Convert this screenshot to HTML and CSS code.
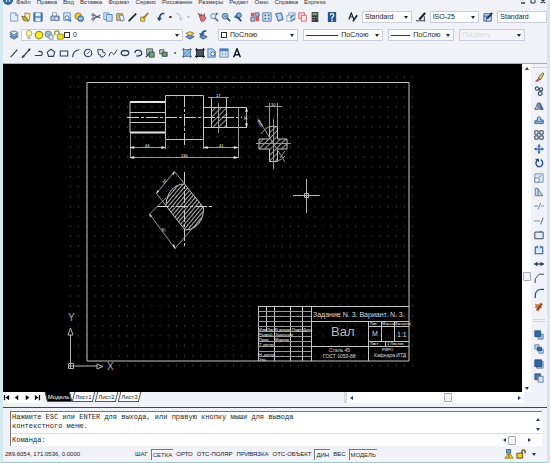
FILE: index.html
```html
<!DOCTYPE html>
<html lang="ru">
<head>
<meta charset="utf-8">
<title>Вал</title>
<link rel="stylesheet" href="styles.css">
</head>
<body>
<svg class="sprite" aria-hidden="true">
    <symbol id="new" viewBox="0 0 12 12"><path d="M2 1h6l2.500 2.500V11H2z" fill="#e3effb" stroke="#6f8fb5"/><path d="M8 1v3h3" fill="none" stroke="#6f8fb5"/></symbol>
    <symbol id="open" viewBox="0 0 12 12"><path d="M5 1l6 1-1 8-6-2z" fill="#f4e9a8" stroke="#8b7a35"/><path d="M1 5l5 1 3 5-6-1z" fill="#c9b23d" stroke="#77661f"/></symbol>
    <symbol id="save" viewBox="0 0 12 12"><path d="M1 1h10v10H1z" fill="#4d86c4" stroke="#25598f"/><path d="M3 1h6v4H3zM3 7h6v4H3z" fill="#e4eff9"/></symbol>
    <symbol id="print" viewBox="0 0 12 12"><path d="M3 1h5v4H3z" fill="#fff" stroke="#7b8dac"/><path d="M1 5h10v5H1z" fill="#b9c5de" stroke="#54698f"/><circle cx="8" cy="8" r="2.500" fill="#dde4f2" stroke="#54698f"/></symbol>
    <symbol id="preview" viewBox="0 0 12 12"><path d="M2 1h8v9H2z" fill="#d7e8fa" stroke="#5f86b5"/><circle cx="6" cy="7" r="2.500" fill="#fff" stroke="#39669c"/><path d="M8 9l3 2.500" stroke="#39669c" stroke-width="1.500"/></symbol>
    <symbol id="publish" viewBox="0 0 12 12"><circle cx="5" cy="5" r="4" fill="#f0c93a" stroke="#95732a"/><circle cx="8" cy="8" r="3.500" fill="#6d9bd0" stroke="#37648f"/><path d="M6 8h4" stroke="#fff"/></symbol>
    <symbol id="cut" viewBox="0 0 12 12"><path d="M11 4L3 8M11 7L3 4" stroke="#3c4f68" stroke-width="1.300"/><circle cx="2.500" cy="3.500" r="1.500" fill="none" stroke="#3c4f68"/><circle cx="2.500" cy="8.500" r="1.500" fill="none" stroke="#3c4f68"/></symbol>
    <symbol id="copyclip" viewBox="0 0 12 12"><path d="M1 1h6v8H1z" fill="#dcecfb" stroke="#5d86b6"/><path d="M4 3h7v8H4z" fill="#c3ddf6" stroke="#4878ad"/></symbol>
    <symbol id="paste" viewBox="0 0 12 12"><path d="M2 2h7v8H2z" fill="#cdbf81" stroke="#7d713c"/><path d="M5 4h5l1 6-4 1z" fill="#e7edf6" stroke="#65789a"/></symbol>
    <symbol id="brush" viewBox="0 0 12 12"><path d="M11 2L5 8l-3 3" stroke="#22262c" stroke-width="2" fill="none"/></symbol>
    <symbol id="blockedit" viewBox="0 0 12 12"><path d="M2 6h5v5H2z" fill="#ead66b" stroke="#8c7726"/><path d="M11 1L5 8" stroke="#9a7d1d" stroke-width="2"/></symbol>
    <symbol id="undo" viewBox="0 0 12 12"><path d="M10 2C6 1 4 4 4 9" fill="none" stroke="#163f73" stroke-width="2"/><path d="M1 7h6l-3 4z" fill="#163f73"/></symbol>
    <symbol id="redo" viewBox="0 0 12 12"><path d="M2 2c4-1 6 2 6 7" fill="none" stroke="#c7ced9" stroke-width="2"/><path d="M5 7h6l-3 4z" fill="#c7ced9"/></symbol>
    <symbol id="dot" viewBox="0 0 6 12"><path d="M2 5h3v2H2z" fill="currentColor"/></symbol>
    <symbol id="pan" viewBox="0 0 12 12"><path d="M2 2l3 3V2l2 3 2-3v4l2 1-3 4H5z" fill="#d77a76" stroke="#8f3d4b"/><path d="M1 1l4 4" stroke="#384f7a"/></symbol>
    <symbol id="zoomrt" viewBox="0 0 12 12"><circle cx="5" cy="5" r="3" fill="#e9f2fb" stroke="#52749c"/><path d="M7 7l4 4" stroke="#52749c" stroke-width="2"/><path d="M9 1v3M8 2h3" stroke="#35506f"/></symbol>
    <symbol id="zoomwin" viewBox="0 0 12 12"><circle cx="5" cy="5" r="3.500" fill="#9fc4e8" stroke="#2f5686"/><path d="M7 7l4 4" stroke="#2f5686" stroke-width="2"/><path d="M4 5h3" stroke="#2f5686"/></symbol>
    <symbol id="zoomprev" viewBox="0 0 12 12"><circle cx="7" cy="4" r="3" fill="#86aedb" stroke="#2a4e7c"/><path d="M5 6l5 5" stroke="#223f63" stroke-width="2"/><path d="M5 2L1 6l4 2z" fill="#2c6aa9"/></symbol>
    <symbol id="props" viewBox="0 0 12 12"><path d="M1 1h4v4H1zM7 5h4v6H7z" fill="#cf5f63"/><path d="M6 1h5v4H6zM1 6h5v5H1z" fill="#a8bbd3" stroke="#6a5878"/></symbol>
    <symbol id="dcenter" viewBox="0 0 12 12"><path d="M1 1h10v10H1z" fill="#d9e8f7" stroke="#46698f"/><path d="M3 3h2v2H3zM7 3h2v2H7zM3 7h2v2H3zM7 7h2v2H7z" fill="#3d6796"/></symbol>
    <symbol id="palette" viewBox="0 0 12 12"><path d="M2 2l7-1 2 8-6 2z" fill="#8fb8e2" stroke="#356295"/><path d="M4 4l4-1M5 6l4-1M5 8l4-1" stroke="#fff"/></symbol>
    <symbol id="sheets" viewBox="0 0 12 12"><path d="M3 1h8v7H3z" fill="#d3e2f1" stroke="#8aa5c2"/><path d="M1 4h5v7H1z" fill="#eef4fa" stroke="#8aa5c2"/><path d="M5 7l5-4M6 11l5-3" stroke="#4a78ad" stroke-width="1.500"/></symbol>
    <symbol id="markup" viewBox="0 0 12 12"><path d="M1 1h7v7H1z" fill="#f6d7d7" stroke="#ca5d60"/><path d="M4 4h6v7H4z" fill="#f8e6e6" stroke="#ca5d60"/></symbol>
    <symbol id="calc" viewBox="0 0 12 12"><path d="M2 0h8v12H2z" fill="#343b3c"/><path d="M3 1h6v3H3z" fill="#6fa06d"/><path d="M3 6h1v1H3zM5 6h1v1H5zM8 6h1v1H8zM3 9h1v1H3zM5 9h1v1H5z" fill="#e4e4e4"/><path d="M8 9h1v1H8z" fill="#e33"/></symbol>
    <symbol id="help" viewBox="0 0 12 12"><path d="M1 0h10v12H1z" fill="#245690"/><path d="M4 4q0-2 2-2t2 2q0 1-2 2.500V8M6 9v2" fill="none" stroke="#fff" stroke-width="1.500"/></symbol>
    <symbol id="textstyle" viewBox="0 0 12 12"><path d="M1 9L4 1l3 8M2 6h4" fill="none" stroke="#16202d" stroke-width="1.400"/><path d="M11 4l-5 7" stroke="#16202d" stroke-width="2"/></symbol>
    <symbol id="dimstyle" viewBox="0 0 12 12"><path d="M0 10.500h11M10 5v6" stroke="#16202d"/><path d="M11 1L4 9" stroke="#16202d" stroke-width="2.500"/></symbol>
    <symbol id="tablestyle" viewBox="0 0 12 12"><path d="M1 2h9v9H1z" fill="#bfd8f2" stroke="#35557d"/><path d="M1 5h9M4 5v6" stroke="#35557d"/><path d="M11 1L5 8" stroke="#16304f" stroke-width="2"/></symbol>
    <symbol id="layers" viewBox="0 0 12 12"><path d="M1 8l5-2 5 2-5 3z" fill="#7f9fc6" stroke="#41658f"/><path d="M1 5.500l5-2 5 2-5 3z" fill="#a9c3e0" stroke="#41658f"/><path d="M1 3l5-2 5 2-5 3z" fill="#dce9f6" stroke="#41658f"/></symbol>
    <symbol id="bulb" viewBox="0 0 12 12"><circle cx="6" cy="4" r="3.500" fill="#fbf4a2" stroke="#a79c48"/><path d="M4 8h4v3H4z" fill="#b6b6b6"/></symbol>
    <symbol id="sun" viewBox="0 0 12 12"><circle cx="6" cy="6" r="4.500" fill="#f7ec2c" stroke="#998f1c" stroke-width="1.500"/></symbol>
    <symbol id="freeze" viewBox="0 0 12 12"><circle cx="5" cy="5" r="4" fill="#a4bcc7" stroke="#6c8793"/><path d="M6 6h5v5H6z" fill="#dfeaf0" stroke="#6c8793"/></symbol>
    <symbol id="unlock" viewBox="0 0 12 12"><path d="M1 6V3q0-2 2.500-2T6 3v3" fill="none" stroke="#8c841b" stroke-width="1.500"/><path d="M4 5h7v6H4z" fill="#efe32d" stroke="#8c841b"/></symbol>
    <symbol id="layercur" viewBox="0 0 12 12"><path d="M1 8l5-2 5 2-5 3z" fill="#6d93c3" stroke="#2f5584"/><path d="M1 4l5-2 5 2-5 3z" fill="#e6d66e" stroke="#847428"/></symbol>
    <symbol id="layerprev" viewBox="0 0 12 12"><path d="M2 8l4-2 5 2-5 3z" fill="#6d93c3" stroke="#2f5584"/><path d="M10 1q-5 0-5 4" fill="none" stroke="#285890" stroke-width="2"/><path d="M1 4h7L4 8z" fill="#285890"/></symbol>
    <symbol id="line" viewBox="0 0 12 12"><path d="M2 11l8-9" stroke="#26384f" stroke-width="1.300"/></symbol>
    <symbol id="xline" viewBox="0 0 12 12"><path d="M1 12L11 1" stroke="#16202d" stroke-width="1.300"/><path d="M9 1h2v2H9zM2 9h2v2H2z" fill="#16202d"/></symbol>
    <symbol id="pline" viewBox="0 0 12 12"><path d="M1 9h6q3 0 3-2.500T7 4H5" fill="none" stroke="#2b435f" stroke-width="1.300"/></symbol>
    <symbol id="polygon" viewBox="0 0 12 12"><path d="M6 1.500L10.500 5 9 10H3L1.500 5z" fill="none" stroke="#2b435f" stroke-width="1.300"/></symbol>
    <symbol id="rect" viewBox="0 0 12 12"><path d="M1.500 3.500h9v6h-9z" fill="none" stroke="#2b435f" stroke-width="1.300"/></symbol>
    <symbol id="arc" viewBox="0 0 12 12"><path d="M2 11q0-8 8-9" fill="none" stroke="#2b435f" stroke-width="1.300"/></symbol>
    <symbol id="circle" viewBox="0 0 12 12"><circle cx="6" cy="6" r="4.500" fill="none" stroke="#2b435f" stroke-width="1.300"/><path d="M5 7l3-3" stroke="#2b435f"/></symbol>
    <symbol id="cloud" viewBox="0 0 12 12"><path d="M2 2h6v3q4 0 3 3t-5 3l-1-3H3z" fill="none" stroke="#2b435f" stroke-width="1.200"/></symbol>
    <symbol id="spline" viewBox="0 0 12 12"><path d="M1 10q2-7 4-4t3 1 3-5" fill="none" stroke="#2b435f" stroke-width="1.200"/></symbol>
    <symbol id="ellipse" viewBox="0 0 12 12"><ellipse cx="6" cy="6" rx="4.500" ry="3" fill="none" stroke="#2b435f" stroke-width="1.600"/></symbol>
    <symbol id="earc" viewBox="0 0 12 12"><path d="M2 6q1-4 4.500-3.500T10.500 6 6 9.500" fill="none" stroke="#2b435f" stroke-width="1.500"/><path d="M4 8h3v3H4z" fill="#6a88ac"/></symbol>
    <symbol id="insert" viewBox="0 0 12 12"><path d="M2 1h7v7H2z" fill="#a5c2a0" stroke="#31505a"/><path d="M5 5h6v6H5z" fill="#75a376" stroke="#25413f"/><path d="M1 11l4-4" stroke="#1e3048" stroke-width="1.500"/></symbol>
    <symbol id="block" viewBox="0 0 12 12"><path d="M2 2h5v5H2z" fill="#b9d2b6" stroke="#31505a"/><path d="M5 5h6v5H5z" fill="#6a9d6d" stroke="#25413f"/></symbol>
    <symbol id="point" viewBox="0 0 12 12"><path d="M5 5h2v2H5z" fill="#233"/></symbol>
    <symbol id="hatch" viewBox="0 0 12 12"><path d="M2 2h8v8H2z" fill="#a9cdf0"/><path d="M2 0v12M10 0v12M0 2h12M0 10h12M2 8l6-6M4 10l6-6" stroke="#31608f" fill="none"/></symbol>
    <symbol id="gradient" viewBox="0 0 12 12"><path d="M2 2h8v8H2z" fill="#4c5562"/><path d="M2 0v12M10 0v12M0 2h12M0 10h12" stroke="#1e2731" stroke-width="1.300" fill="none"/></symbol>
    <symbol id="region" viewBox="0 0 12 12"><path d="M1 1h6l3 3v7H1z" fill="#b6d3ef" stroke="#47719f"/><circle cx="7" cy="7" r="2.500" fill="#e8f2fb" stroke="#2d5c90"/></symbol>
    <symbol id="table" viewBox="0 0 12 12"><path d="M1 1h10v10H1z" fill="#e5eefa" stroke="#4875b5"/><path d="M1 1h10v3H1z" fill="#4b7cc0"/><path d="M4 4v7M8 4v7M1 7h10" stroke="#9bb8df"/></symbol>
    <symbol id="mtext" viewBox="0 0 12 12"><path d="M2 11L6 1l4 10M3.500 8h5" fill="none" stroke="#111a26" stroke-width="1.800"/></symbol>
    <symbol id="erase" viewBox="0 0 12 12"><path d="M1 11l6-5 2 2-5 4z" fill="#c2556b"/><path d="M5 7l5-6 2 1-4 7z" fill="#e0d77a" stroke="#5e5c2e"/></symbol>
    <symbol id="copy" viewBox="0 0 12 12"><circle cx="3.500" cy="3" r="2" fill="none" stroke="#34475f" stroke-width="1.300"/><circle cx="8.500" cy="4" r="2" fill="none" stroke="#34475f" stroke-width="1.300"/><circle cx="7.500" cy="9" r="2.300" fill="#dce5ef" stroke="#34475f" stroke-width="1.300"/></symbol>
    <symbol id="mirror" viewBox="0 0 12 12"><path d="M5 2v8H1z" fill="#c3d7ec" stroke="#2d435f"/><path d="M7 2v8h4z" fill="#6689b1" stroke="#2d435f"/></symbol>
    <symbol id="offset" viewBox="0 0 12 12"><path d="M1 10V7h3V4q2-4 4 0v2h3v4z" fill="#b9d4f1" stroke="#2c5d9c" stroke-width="1.200"/><path d="M3 8h7" stroke="#2c5d9c"/></symbol>
    <symbol id="array" viewBox="0 0 12 12"><path d="M1 1h4v4H1zM7 1h4v4H7zM1 7h4v4H1zM7 7h4v4H7z" fill="none" stroke="#2f3f54" stroke-width="1.200"/></symbol>
    <symbol id="move" viewBox="0 0 12 12"><path d="M6 1v10M1 6h10" stroke="#2d65a8" stroke-width="1.500"/><path d="M6 0l2 3H4zM6 12l2-3H4zM0 6l3-2v4zM12 6L9 4v4z" fill="#2d65a8"/></symbol>
    <symbol id="rotate" viewBox="0 0 12 12"><path d="M4 2.500A4 4.500 0 1 0 8 2" fill="none" stroke="#1f4f88" stroke-width="1.700"/><path d="M1 1h5v4z" fill="#1f4f88"/></symbol>
    <symbol id="scale" viewBox="0 0 12 12"><path d="M1 1h10v10H1z" fill="#dfe9f3" stroke="#71869f"/><path d="M1 6h5v5H1zM6 5l3-2" fill="#fff" stroke="#5c7696"/></symbol>
    <symbol id="stretch" viewBox="0 0 12 12"><path d="M1.500 1.500h3l6 9h-9z" fill="#c4dbf0" stroke="#50657e"/><path d="M5 2v8" stroke="#50657e"/></symbol>
    <symbol id="trim" viewBox="0 0 12 12"><path d="M0 6h5M8 6h4" stroke="#4a80b5"/><path d="M8 2L5 10" stroke="#5b7188"/></symbol>
    <symbol id="extend" viewBox="0 0 12 12"><path d="M0 6h7" stroke="#4a80b5"/><path d="M11 2L8 10" stroke="#33465c"/></symbol>
    <symbol id="breakpt" viewBox="0 0 12 12"><path d="M1 2.500h10v8H1z" fill="#e4ebf3" stroke="#3d4e63" stroke-width="1.200"/><path d="M7 1h2v2H7z" fill="#2d65a8"/></symbol>
    <symbol id="break" viewBox="0 0 12 12"><path d="M4 2.500H1.500v8h9v-8H8" fill="#dceaf8" stroke="#2f5d90" stroke-width="1.300"/><path d="M3 1h2v3H3zM7 1h2v3H7z" fill="#4a80b5"/></symbol>
    <symbol id="join" viewBox="0 0 12 12"><path d="M0 6h12" stroke="#26313e" stroke-width="1.500"/><path d="M4 3L1 6l3 3zM8 3l3 3-3 3z" fill="#26313e"/></symbol>
    <symbol id="chamfer" viewBox="0 0 12 12"><path d="M1.500 12V7L6 1.500h6" fill="none" stroke="#3d4e63" stroke-width="1.200"/></symbol>
    <symbol id="fillet" viewBox="0 0 12 12"><path d="M1.500 12V9q0-7 8-7.500H12" fill="none" stroke="#1f4f88" stroke-width="1.500"/></symbol>
    <symbol id="explode" viewBox="0 0 12 12"><path d="M1 2l4 1 4-3-1 4 2 3-3 1-2 4-1-4-3-1 1-2z" fill="#d9763c"/><path d="M3 10l7-8" stroke="#612a1a" stroke-width="1.500"/></symbol>
    <symbol id="front" viewBox="0 0 12 12"><path d="M5 5h6v6H5z" fill="#a6c3e0" stroke="#56789c"/><path d="M1 1h7v7H1z" fill="#3569a3" stroke="#1f4c80"/></symbol>
    <symbol id="back" viewBox="0 0 12 12"><path d="M1 1h5v5H1zM6 6h5v5H6z" fill="#c3d6ea" stroke="#56789c"/><path d="M4 4h5v4H4z" fill="#3569a3" stroke="#1f4c80"/></symbol>
    <symbol id="above" viewBox="0 0 12 12"><path d="M3 3h8v8H3z" fill="#9dbbda" stroke="#56789c"/><path d="M1 1h8v8H1z" fill="#2f65a2" stroke="#1f4c80"/></symbol>
    <symbol id="below" viewBox="0 0 12 12"><path d="M1 1h7v7H1z" fill="#51719b" stroke="#31507a"/><path d="M5 4h6v7H5z" fill="#d7e4f2" stroke="#56789c"/></symbol>
    <symbol id="comm" viewBox="0 0 12 12"><path d="M3 0h5v5H3z" fill="#6c99ca" stroke="#355f90"/><path d="M6 4l5 7H1z" fill="#f3da34" stroke="#7f6d13"/><path d="M6 6v4" stroke="#222"/></symbol>
    <symbol id="padlock" viewBox="0 0 12 12"><path d="M7 6V3q0-2 2-2t2 2v2" fill="none" stroke="#4d430d" stroke-width="1.500"/><path d="M1 5h7v6H1z" fill="#eec92a" stroke="#4d430d"/></symbol>
</svg>

<div class="app">
    <header class="menubar">
        <svg class="logo" viewBox="0 0 10 10" aria-hidden="true"><circle cx="5" cy="5" r="5" fill="#276a9c"/><path d="M3 7l2-5 2 5" stroke="#fff" fill="none"/></svg>
        <nav class="menu">
            <a href="#">Файл</a><a href="#">Правка</a><a href="#">Вид</a><a href="#">Вставка</a><a href="#">Формат</a><a href="#">Сервис</a><a href="#">Рисование</a><a href="#">Размеры</a><a href="#">Редакт</a><a href="#">Окно</a><a href="#">Справка</a><a href="#">Express</a>
        </nav>
        <div class="winbtns">
            <button class="btn" aria-label="Свернуть"><svg viewBox="0 0 8 8"><path d="M2 6h4" stroke="#234" stroke-width="1.500"/></svg></button>
            <button class="btn" aria-label="Восстановить"><svg viewBox="0 0 8 8"><path d="M2 2h4v4H2z" fill="none" stroke="#234"/></svg></button>
            <button class="btn" aria-label="Закрыть"><svg viewBox="0 0 8 8"><path d="M2 2l4 4M6 2L2 6" stroke="#234" stroke-width="1.500"/></svg></button>
        </div>
    </header>

    <div class="toolbar">
        <div class="group">
            <button class="btn" aria-label="Создать"><svg><use href="#new"/></svg></button>
            <button class="btn" aria-label="Открыть"><svg><use href="#open"/></svg></button>
            <button class="btn" aria-label="Сохранить"><svg><use href="#save"/></svg></button>
        </div>
        <div class="group">
            <button class="btn" aria-label="Печать"><svg><use href="#print"/></svg></button>
            <button class="btn" aria-label="Просмотр"><svg><use href="#preview"/></svg></button>
            <button class="btn" aria-label="Публикация"><svg><use href="#publish"/></svg></button>
        </div>
        <div class="group">
            <button class="btn" aria-label="Вырезать"><svg><use href="#cut"/></svg></button>
            <button class="btn" aria-label="Копировать в буфер"><svg><use href="#copyclip"/></svg></button>
            <button class="btn" aria-label="Вставить"><svg><use href="#paste"/></svg></button>
            <button class="btn" aria-label="Копирование свойств"><svg><use href="#brush"/></svg></button>
            <button class="btn" aria-label="Редактор блоков"><svg><use href="#blockedit"/></svg></button>
        </div>
        <div class="group">
            <button class="btn" aria-label="Отменить"><svg><use href="#undo"/></svg></button>
            <button class="btn mini" aria-label="Список отмены"><svg><use href="#dot"/></svg></button>
            <button class="btn" aria-label="Повторить"><svg><use href="#redo"/></svg></button>
            <button class="btn mini off" aria-label="Список повтора"><svg><use href="#dot"/></svg></button>
        </div>
        <div class="group">
            <button class="btn" aria-label="Панорамирование"><svg><use href="#pan"/></svg></button>
            <button class="btn" aria-label="Зумирование"><svg><use href="#zoomrt"/></svg></button>
            <button class="btn" aria-label="Показать рамкой"><svg><use href="#zoomwin"/></svg></button>
            <button class="btn" aria-label="Показать предыдущий"><svg><use href="#zoomprev"/></svg></button>
        </div>
        <div class="group">
            <button class="btn" aria-label="Свойства"><svg><use href="#props"/></svg></button>
            <button class="btn" aria-label="Центр управления"><svg><use href="#dcenter"/></svg></button>
            <button class="btn" aria-label="Палитры"><svg><use href="#palette"/></svg></button>
            <button class="btn" aria-label="Подшивки"><svg><use href="#sheets"/></svg></button>
            <button class="btn" aria-label="Пометки"><svg><use href="#markup"/></svg></button>
            <button class="btn" aria-label="Калькулятор"><svg><use href="#calc"/></svg></button>
        </div>
        <div class="group">
            <button class="btn" aria-label="Справка"><svg><use href="#help"/></svg></button>
        </div>
        <div class="styles">
            <button class="btn" aria-label="Стили текста"><svg><use href="#textstyle"/></svg></button>
            <div class="combo"><select aria-label="Стиль текста"><option>Standard</option></select></div>
            <button class="btn" aria-label="Размерные стили"><svg><use href="#dimstyle"/></svg></button>
            <div class="combo"><select aria-label="Размерный стиль"><option>ISO-25</option></select></div>
            <button class="btn" aria-label="Стили таблиц"><svg><use href="#tablestyle"/></svg></button>
            <div class="combo noarrow"><select aria-label="Стиль таблиц"><option>Standard</option></select></div>
        </div>
    </div>

    <div class="toolbar props">
        <button class="btn" aria-label="Диспетчер слоев"><svg><use href="#layers"/></svg></button>
        <div class="combo layer">
            <svg><use href="#bulb"/></svg><svg><use href="#sun"/></svg><svg><use href="#freeze"/></svg><svg><use href="#unlock"/></svg><i class="swatch"></i>
            <select aria-label="Слой"><option>0</option></select>
        </div>
        <button class="btn" aria-label="Сделать слой текущим"><svg><use href="#layercur"/></svg></button>
        <button class="btn" aria-label="Предыдущий слой"><svg><use href="#layerprev"/></svg></button>
        <div class="byprops">
            <div class="combo color"><i class="swatch"></i><select aria-label="Цвет"><option>ПоСлою</option></select></div>
            <div class="combo ltype"><i class="sample"></i><select aria-label="Тип линий"><option>ПоСлою</option></select></div>
            <div class="combo weight"><i class="sample"></i><select aria-label="Вес линий"><option>ПоСлою</option></select></div>
            <div class="combo plot"><select aria-label="Стиль печати" disabled><option>ПоЦвету</option></select></div>
        </div>
    </div>

    <div class="toolbar">
        <div class="draw">
            <button class="btn" aria-label="Отрезок"><svg><use href="#line"/></svg></button>
            <button class="btn" aria-label="Прямая"><svg><use href="#xline"/></svg></button>
            <button class="btn" aria-label="Полилиния"><svg><use href="#pline"/></svg></button>
            <button class="btn" aria-label="Многоугольник"><svg><use href="#polygon"/></svg></button>
            <button class="btn" aria-label="Прямоугольник"><svg><use href="#rect"/></svg></button>
            <button class="btn" aria-label="Дуга"><svg><use href="#arc"/></svg></button>
            <button class="btn" aria-label="Круг"><svg><use href="#circle"/></svg></button>
            <button class="btn" aria-label="Облако"><svg><use href="#cloud"/></svg></button>
            <button class="btn" aria-label="Сплайн"><svg><use href="#spline"/></svg></button>
            <button class="btn" aria-label="Эллипс"><svg><use href="#ellipse"/></svg></button>
            <button class="btn" aria-label="Эллиптическая дуга"><svg><use href="#earc"/></svg></button>
            <button class="btn" aria-label="Вставить блок"><svg><use href="#insert"/></svg></button>
            <button class="btn" aria-label="Создать блок"><svg><use href="#block"/></svg></button>
            <button class="btn" aria-label="Точка"><svg><use href="#point"/></svg></button>
            <button class="btn" aria-label="Штриховка"><svg><use href="#hatch"/></svg></button>
            <button class="btn" aria-label="Градиент"><svg><use href="#gradient"/></svg></button>
            <button class="btn" aria-label="Область"><svg><use href="#region"/></svg></button>
            <button class="btn" aria-label="Таблица"><svg><use href="#table"/></svg></button>
            <button class="btn" aria-label="Текст"><svg><use href="#mtext"/></svg></button>
        </div>
    </div>

    <main class="work">
        <div class="view">
            <svg class="drawing" role="img" aria-label="Чертеж вала">
                <defs>
                    <pattern id="grid" x="66.400" y="72.300" width="8.150" height="9.940" patternUnits="userSpaceOnUse"><path d="M3.500 4.500h1v1h-1z" fill="#6a6a6a"/></pattern>
                    <pattern id="diag" width="4" height="4" patternUnits="userSpaceOnUse" patternTransform="rotate(45)"><path d="M0 0v4" stroke="#ccc" stroke-width="1.500"/></pattern>
                    <pattern id="diag2" width="3" height="3" patternUnits="userSpaceOnUse" patternTransform="rotate(40)"><path d="M0 0v3" stroke="#d4d4d4" stroke-width="1.700"/></pattern>
                </defs>
                <g transform="translate(-3 -64)">
                    <path d="M66.400 72.300h350v298h-350z" fill="url(#grid)"/>
                    <path class="ln" d="M87 82.500h322v278.500h-322z"/>

                    <!-- shaft -->
                    <path class="bold" d="M130 102h35.500M130 132.500h35.500"/>
                    <path class="ln" d="M130 102v31M130 112.500h35.500M130 122.500h35.500M165.500 95.500h38v44h-38zM203.500 107.500h43M203.500 127.500h43M211.500 97v30.500M226.500 97v30.500"/>
                    <path d="M211.500 107.500h15v20h-15z" fill="url(#diag)"/>
                    <path class="axis" d="M127 117.500h115M184.500 95v52"/>
                    <path class="dim" d="M218.500 103v30M130.500 133v25M165.500 140v9M203.500 140v9M238.500 107v51M208 97.500h21M246.500 107v21M130 147.500h35.500M203.500 147.500h35M130 157.500h108"/>
                    <path class="tip" d="M130 147.500l4-1v2zM165.500 147.500l-4-1v2zM203.500 147.500l4-1v2zM238 147.500l-4-1v2zM130 157.500l4-1v2zM238 157.500l-4-1v2zM246.500 107.500l-1 4h2zM246.500 127.500l-1-4h2z"/>
                    <text class="note" x="216" y="97">17</text>
                    <text class="note" x="145" y="147">44</text>
                    <text class="note" x="219" y="147">41</text>
                    <text class="note" x="181" y="157">130</text>
                    <text class="note" transform="translate(247 120) rotate(-90)">20</text>

                    <!-- cross section -->
                    <path class="ln cut" d="M269.500 127q4-2 8 0v12h9.500v10h-9.500v12.500h-8v-12.500h-10.500v-10h10.500z"/>
                    <path class="dim" d="M269.500 103v24M277.500 103v24M265 106.500h17M256 143.500h35M273.500 119v50M258 119l27 43M261 134q3-5 9-8M277 161q5-1 8-5M280 158l5-7"/>
                    <text class="note" x="271" y="106">10</text>
                    <text class="note" transform="translate(257 121) rotate(57)">R20</text>

                    <!-- milled section -->
                    <path class="ln milled" d="M184.500 184L203.500 207.500C204 221 196 230 185 230L166 205.700C166 193 174 184 184.500 184z"/>
                    <path class="axis" d="M157 206.500h57M184.500 172v74"/>
                    <path class="dim" d="M166 205.700L156.500 193.500L174.500 171.500L184.500 184M166 198L149.500 214L175 248.500L202 217"/>
                    <path class="tip" d="M156.500 193.500l1-3 1 1zM174.500 171.500l-2 2 1 1zM149.500 214l1 3 1-1zM175 248.500l-2-3 1-1z"/>
                    <text class="note" transform="translate(164 184) rotate(-50)">30</text>
                    <text class="note" transform="translate(161 229) rotate(53)">42</text>

                    <!-- cursor -->
                    <path class="cur" d="M293 195.500h27M306.500 179v34M304.500 193.500h4v4h-4z"/>

                    <!-- ucs icon -->
                    <path class="cur" d="M68.500 363.500h5v5h-5zM68 366h29M70.500 369v-34M70.500 328l-2.500 7h5zM103 366.500l-6-2.500v5z"/>
                    <text class="ucs" x="68" y="321">Y</text>
                    <text class="ucs" x="107" y="370">X</text>

                    <!-- title block -->
                    <path class="ln" d="M258 306.500h151M311.500 321.500h97.500M311.500 346.500h97.500M258.500 306v55M266.500 306v25M274.500 306v55M290.500 306v55M302.500 306v55M311.500 306v55M368.500 321v40M368 326.500h41M368 341.500h41M381.500 321v20M394.500 321v20M385.500 341v5"/>
                    <path class="dim" d="M258 311.500h53M258 316.500h53M258 321.500h53M258 326.500h53M258 331.500h53M258 336.500h53M258 341.500h53M258 346.500h53M258 351.500h53M258 356.500h53"/>
                    <text class="cad" x="313" y="317">Задание N. 3. Вариант. N. 3.</text>
                    <text class="name" x="331" y="336">Вал</text>
                    <text class="cad" x="372" y="336">М</text>
                    <text class="cad" x="397" y="337">1:1</text>
                    <text class="cell" x="329" y="352">Сталь 45</text>
                    <text class="cell" x="323" y="358">ГОСТ 1050-88</text>
                    <text class="note" x="382" y="351">РИРО</text>
                    <text class="cell" x="374" y="357">Кафедра ИТД</text>
                    <text class="note" x="370" y="325">Лит.</text>
                    <text class="note" x="382" y="325">Масса</text>
                    <text class="note" x="394" y="325">Масштаб</text>
                    <text class="note" x="370" y="345">Лист</text>
                    <text class="note" x="387" y="345">1 Листов</text>
                    <text class="note" x="259" y="331">Изм.</text>
                    <text class="note" x="267" y="331">Лист</text>
                    <text class="note" x="275" y="331">N докум.</text>
                    <text class="note" x="292" y="331">Подп.</text>
                    <text class="note" x="303" y="331">Дата</text>
                    <text class="note" x="259" y="336">Разраб.</text>
                    <text class="note" x="275" y="336">Зыкльнов</text>
                    <text class="note" x="259" y="341">Пров.</text>
                    <text class="note" x="275" y="341">Марков</text>
                    <text class="note" x="259" y="346">Т. контр.</text>
                    <text class="note" x="259" y="356">Н. контр.</text>
                    <text class="note" x="259" y="361">Утв.</text>
                </g>
            </svg>
        </div>
        <div class="vscroll">
            <button class="arrow up" aria-label="Вверх"></button>
            <span class="thumb"></span>
            <button class="arrow down" aria-label="Вниз"></button>
        </div>
        <aside class="modify">
            <button class="btn" aria-label="Стереть"><svg><use href="#erase"/></svg></button>
            <button class="btn" aria-label="Копировать"><svg><use href="#copy"/></svg></button>
            <button class="btn" aria-label="Зеркало"><svg><use href="#mirror"/></svg></button>
            <button class="btn" aria-label="Подобие"><svg><use href="#offset"/></svg></button>
            <button class="btn" aria-label="Массив"><svg><use href="#array"/></svg></button>
            <button class="btn" aria-label="Перенести"><svg><use href="#move"/></svg></button>
            <button class="btn" aria-label="Повернуть"><svg><use href="#rotate"/></svg></button>
            <button class="btn" aria-label="Масштаб"><svg><use href="#scale"/></svg></button>
            <button class="btn" aria-label="Растянуть"><svg><use href="#stretch"/></svg></button>
            <button class="btn" aria-label="Обрезать"><svg><use href="#trim"/></svg></button>
            <button class="btn" aria-label="Удлинить"><svg><use href="#extend"/></svg></button>
            <button class="btn" aria-label="Разорвать в точке"><svg><use href="#breakpt"/></svg></button>
            <button class="btn" aria-label="Разорвать"><svg><use href="#break"/></svg></button>
            <button class="btn" aria-label="Соединить"><svg><use href="#join"/></svg></button>
            <button class="btn" aria-label="Фаска"><svg><use href="#chamfer"/></svg></button>
            <button class="btn" aria-label="Сопряжение"><svg><use href="#fillet"/></svg></button>
            <button class="btn" aria-label="Расчленить"><svg><use href="#explode"/></svg></button>
            <hr>
            <button class="btn" aria-label="На передний план"><svg><use href="#front"/></svg></button>
            <button class="btn" aria-label="На задний план"><svg><use href="#back"/></svg></button>
            <button class="btn" aria-label="Поместить перед"><svg><use href="#above"/></svg></button>
            <button class="btn" aria-label="Поместить за"><svg><use href="#below"/></svg></button>
        </aside>
    </main>

    <div class="tabs">
        <div class="tabnav">
            <button class="btn" aria-label="Первый"><svg viewBox="0 0 8 8"><path d="M1 1h1.500v6H1zM7 1v6L3 4z"/></svg></button>
            <button class="btn" aria-label="Назад"><svg viewBox="0 0 8 8"><path d="M6 1v6L2 4z"/></svg></button>
            <button class="btn" aria-label="Вперед"><svg viewBox="0 0 8 8"><path d="M2 1v6l4-3z"/></svg></button>
            <button class="btn" aria-label="Последний"><svg viewBox="0 0 8 8"><path d="M7 1H5.500v6H7zM1 1v6l4-3z"/></svg></button>
        </div>
        <button class="tab active">Модель</button>
        <button class="tab">Лист1</button>
        <button class="tab">Лист2</button>
        <button class="tab">Лист3</button>
        <div class="hscroll">
            <button class="arrow left" aria-label="Влево"></button>
            <span class="thumb"></span>
            <button class="arrow right" aria-label="Вправо"></button>
        </div>
    </div>

    <section class="command">
        <div class="log">
            <p>Нажмите ESC или ENTER для выхода, или правую кнопку мыши для вывода<br>контекстного меню.</p>
            <div class="logscroll">
                <button class="arrow up" aria-label="Вверх"></button>
                <button class="arrow down" aria-label="Вниз"></button>
            </div>
        </div>
        <div class="prompt">
            <label for="cmd">Команда:</label>
            <input id="cmd" type="text">
            <button class="arrow left" aria-label="Влево"></button>
            <span class="thumb"></span>
            <button class="arrow right" aria-label="Вправо"></button>
        </div>
    </section>

    <footer class="status">
        <span class="coords">289.6054, 171.0536, 0.0000</span>
        <button class="mode">ШАГ</button>
        <button class="mode on">СЕТКА</button>
        <button class="mode">ОРТО</button>
        <button class="mode">ОТС-ПОЛЯР</button>
        <button class="mode">ПРИВЯЗКА</button>
        <button class="mode">ОТС-ОБЪЕКТ</button>
        <button class="mode on">ДИН</button>
        <button class="mode">ВЕС</button>
        <button class="mode on">МОДЕЛЬ</button>
        <div class="tray">
            <button class="btn" aria-label="Связь"><svg><use href="#comm"/></svg></button>
            <button class="btn" aria-label="Блокировка"><svg><use href="#padlock"/></svg></button>
            <button class="arrow down" aria-label="Меню строки состояния"></button>
        </div>
    </footer>
</div>
</body>
</html>
```

FILE: styles.css
```css
* {
    box-sizing: border-box;
}
body {
    margin: 0;
    font: 6px/10px "Liberation Sans", sans-serif;
    color: #222;
    background: #f1f1f8;
}
button, select, input {
    font: inherit;
    color: inherit;
    margin: 0;
    padding: 0;
    border: none;
    background: none;
}
.sprite {
    display: none;
}
.app {
    display: flex;
    flex-direction: column;
    height: 100vh;
    overflow: hidden;
    border-left: 3px solid #d3ebee;
    border-right: 3px solid #dfe3ef;
    border-bottom: 1px solid #8fd0cb;
}

/* menu */
.menubar {
    display: flex;
    align-items: flex-end;
    height: 8px;
    padding-bottom: 3px;
}
.logo {
    width: 10px;
    height: 10px;
    margin-right: 3px;
}
.menu {
    display: flex;
    flex: 1;
    gap: 6px;
    line-height: 6px;
}
.menu a {
    color: #333;
    text-decoration: none;
}
.winbtns {
    display: flex;
    gap: 2px;
}

/* toolbars */
.btn {
    display: flex;
    align-items: center;
    justify-content: center;
    width: 12px;
    height: 12px;
}
.btn svg, .layer svg {
    width: 10px;
    height: 10px;
}
.winbtns .btn, .winbtns svg {
    width: 8px;
    height: 8px;
}
.btn.mini {
    width: 6px;
}
.btn.mini svg {
    width: 6px;
}
.btn.off {
    color: #b5bcc8;
}
.toolbar {
    display: flex;
    align-items: center;
    gap: 5px;
    height: 18px;
    padding-left: 5px;
}
.group {
    display: flex;
}
.styles {
    display: flex;
    flex: 1;
    align-items: center;
    gap: 3px;
    margin-left: 4px;
}
.draw {
    display: flex;
    justify-content: space-between;
    width: 235px;
}
.combo {
    display: flex;
    flex: 1;
    align-items: center;
    position: relative;
    height: 12px;
    padding-left: 2px;
    font-size: 7px;
    background: #fff;
    border: 1px solid #c9ccdb;
}
.combo select {
    flex: 1;
    min-width: 0;
    height: 10px;
    appearance: none;
}
.combo::after {
    content: "";
    position: absolute;
    right: 3px;
    top: 4px;
    border: 2px solid transparent;
    border-top: 3px solid #17273d;
    border-bottom: none;
    pointer-events: none;
}
.combo.noarrow::after {
    display: none;
}
.props {
    gap: 0;
}
.props .btn {
    margin-right: 1px;
}
.combo.layer {
    flex: 0 0 162px;
    margin-right: 1px;
}
.swatch {
    width: 6px;
    height: 6px;
    margin-right: 3px;
    border: 1px solid #333;
}
.byprops {
    display: flex;
    flex: 1;
    gap: 5px;
    margin: 0 22px 0 8px;
}
.sample {
    width: 32px;
    margin-right: 3px;
    border-top: 1px solid #333;
}
.color, .ltype {
    flex: 80;
}
.weight, .plot {
    flex: 65;
}
.weight .sample {
    width: 19px;
}
.plot {
    background: #f4f4f9;
}
.plot select {
    color: #d6d8e2;
    opacity: 1;
}

/* drawing area */
.work {
    display: flex;
    flex: 1;
    min-height: 0;
    margin-top: 1px;
    border-top: 1px solid #aaadb8;
}
.view {
    flex: 1;
    min-width: 0;
    background: #000;
}
.drawing {
    display: block;
    width: 100%;
    height: 100%;
}
.ln, .bold, .dim, .axis, .cur {
    fill: none;
    stroke: #c4c4c4;
}
.cut {
    fill: url(#diag);
}
.milled {
    fill: url(#diag2);
}
.bold {
    stroke: #e4e4e4;
    stroke-width: 2;
}
.dim {
    stroke: #999;
}
.axis {
    stroke: #ccc;
    stroke-dasharray: 12 2 3 2;
}
.cur {
    stroke: #b4b4b4;
}
.tip {
    fill: #fff;
    stroke: #ddd;
    stroke-width: .5;
}
.drawing text {
    fill: #ddd;
}
.drawing .note {
    font-size: 4px;
    fill: #fff;
}
.drawing .cell {
    font-size: 5px;
}
.drawing .cad {
    font-size: 7px;
}
.drawing .name {
    font-size: 13px;
    fill: #bbb;
}
.drawing .ucs {
    font-size: 10px;
    fill: #aaa;
}
.arrow {
    width: 8px;
    height: 8px;
}
.arrow::before {
    content: "";
    display: block;
    width: 0;
    margin: auto;
    border: 2px solid transparent;
}
.arrow.up::before {
    border-bottom: 3px solid #1c3a61;
    border-top: none;
}
.arrow.down::before {
    border-top: 3px solid #1c3a61;
    border-bottom: none;
}
.arrow.left::before {
    border-right: 3px solid #1c3a61;
    border-left: none;
}
.arrow.right::before {
    border-left: 3px solid #1c3a61;
    border-right: none;
}
.thumb {
    width: 8px;
    height: 9px;
    background: #f3f3f8;
    border: 1px solid #a9a9b5;
    border-radius: 1px;
}
.vscroll {
    display: flex;
    flex-direction: column;
    align-items: center;
    justify-content: space-between;
    width: 9px;
    background: #fff;
}
.vscroll .thumb {
    margin-top: 97px;
}
.modify {
    display: flex;
    flex-direction: column;
    align-items: center;
    justify-content: space-between;
    width: 16px;
    margin-top: 3px;
    padding: 3px 0 8px;
    border-top: 1px solid #d5d2e0;
}
.modify hr {
    width: 12px;
    height: 3px;
    margin: 4px 0;
    border: 1px solid #d5d2e0;
    border-width: 1px 0;
}

/* layout tabs */
.tabs {
    display: flex;
    height: 16px;
    padding-bottom: 4px;
    border-bottom: 1px solid #444;
}
.tabnav {
    display: flex;
    justify-content: space-between;
    align-items: center;
    width: 38px;
    margin-right: 4px;
    background: #fff;
}
.tabnav .btn, .tabnav svg {
    width: 7px;
    height: 7px;
}
.tab {
    position: relative;
    z-index: 0;
    width: 23px;
    height: 10px;
    text-align: center;
}
.tab::before {
    content: "";
    position: absolute;
    z-index: -1;
    inset: 0 1px;
    background: #fff;
    border: 1px solid #555;
    border-top: none;
    transform: skewX(-14deg);
}
.tab.active {
    width: 27px;
    color: #fff;
}
.tab.active::before {
    background: #000;
    transform: skewX(14deg);
}
.hscroll {
    display: flex;
    align-items: center;
    justify-content: space-between;
    width: 33%;
    margin: 0 23px 0 auto;
    background: #fff;
    border-left: 3px solid #d9d9e2;
}
.hscroll .thumb {
    margin-left: 24px;
}

/* command line */
.command {
    margin: 3px 5px 0 7px;
    font: 7px/9px "Liberation Mono", monospace;
    background: #fff;
    border: 1px solid #777;
    border-width: 1px 0 0 1px;
}
.log {
    display: flex;
    justify-content: space-between;
    height: 22px;
    border-bottom: 1px solid #dcdce6;
}
.log p {
    margin: 1px;
}
.logscroll {
    display: flex;
    flex-direction: column;
    justify-content: space-between;
    padding: 3px 0 0;
}
.prompt {
    display: flex;
    align-items: center;
    height: 12px;
    padding: 0 9px 0 1px;
}
.prompt input {
    flex: 1;
    min-width: 0;
    height: 10px;
    margin-left: 3px;
    outline: none;
}
.prompt .arrow.right {
    margin-left: 9px;
}

/* status bar */
.status {
    display: flex;
    align-items: center;
    gap: 2px;
    height: 16px;
    padding-left: 2px;
}
.coords {
    flex: 0 0 127px;
}
.mode {
    height: 11px;
    padding: 0 1px;
    white-space: nowrap;
}
.mode.on {
    background: #f8f8fc;
    border: 1px solid #777;
    border-width: 1px 0 0 1px;
}
.tray {
    display: flex;
    align-items: center;
    margin: 0 9px 0 auto;
}
.tray .arrow {
    margin-left: 3px;
}
```
